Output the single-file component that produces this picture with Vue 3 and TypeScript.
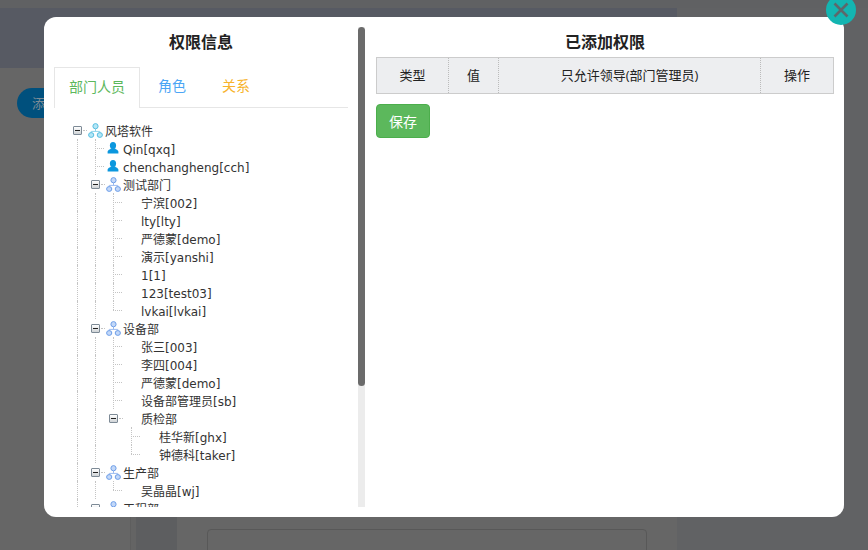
<script setup lang="ts">
import { computed } from 'vue';

interface TreeNode {
    name: string;
    kind?: 'org' | 'user';
    children?: TreeNode[];
}
interface TreeRow {
    name: string;
    level: number;
    kind?: 'org' | 'user';
    isParent: boolean;
    isLast: boolean;
    guides: number[];
}

const tree: TreeNode[] = [
    {
        name: '风塔软件',
        kind: 'org',
        children: [
            { name: 'Qin[qxq]', kind: 'user' },
            { name: 'chenchangheng[cch]', kind: 'user' },
            {
                name: '测试部门',
                kind: 'org',
                children: [
                    { name: '宁滨[002]' },
                    { name: 'lty[lty]' },
                    { name: '严德蒙[demo]' },
                    { name: '演示[yanshi]' },
                    { name: '1[1]' },
                    { name: '123[test03]' },
                    { name: 'lvkai[lvkai]' },
                ],
            },
            {
                name: '设备部',
                kind: 'org',
                children: [
                    { name: '张三[003]' },
                    { name: '李四[004]' },
                    { name: '严德蒙[demo]' },
                    { name: '设备部管理员[sb]' },
                    {
                        name: '质检部',
                        children: [{ name: '桂华新[ghx]' }, { name: '钟德科[taker]' }],
                    },
                ],
            },
            {
                name: '生产部',
                kind: 'org',
                children: [{ name: '吴晶晶[wj]' }],
            },
            { name: '工程部', kind: 'org', children: [] },
        ],
    },
];

const rows = computed(() => {
    const out: TreeRow[] = [];
    const walk = (nodes: TreeNode[], level: number, guides: number[]) => {
        nodes.forEach((node, i) => {
            const isLast = i === nodes.length - 1;
            const isParent = !!node.children;
            out.push({ name: node.name, kind: node.kind, level, isParent, isLast, guides });
            if (node.children) {
                walk(node.children, level + 1, isLast && level > 0 ? guides : [...guides, level]);
            }
        });
    };
    walk(tree, 0, []);
    return out;
});

const columns = [
    { label: '类型', width: '72px' },
    { label: '值', width: '50px' },
    { label: '只允许领导(部门管理员)', width: '262px' },
    { label: '操作', width: 'auto' },
];
</script>

<template>
    <div class="page">
        <div class="page-top"></div>
        <div class="page-head"></div>
        <div class="page-body">
            <div class="add-btn">添加</div>
            <div class="page-side"></div>
            <div class="page-card">
                <div class="page-input"></div>
            </div>
        </div>

        <div class="modal">
            <div class="close">
                <svg width="18" height="18" viewBox="0 0 18 18">
                    <path d="M2.5 2.5 L15.5 15.5 M15.5 2.5 L2.5 15.5" stroke="#5c686b" stroke-width="2.6" fill="none" />
                </svg>
            </div>

            <div class="left">
                <div class="left-inner">
                    <h3 class="title">权限信息</h3>
                    <div class="tabs">
                        <div class="tab active">部门人员</div>
                        <div class="tab blue">角色</div>
                        <div class="tab orange">关系</div>
                    </div>
                    <div class="tree">
                        <div v-for="(row, i) in rows" :key="i" class="row" :style="{ paddingLeft: row.level * 18 + 'px' }">
                            <i
                                v-for="g in row.guides"
                                :key="g"
                                class="guide"
                                :style="{ left: g * 18 + 4 + 'px' }"
                            ></i>
                            <i
                                v-if="!row.isParent && row.level > 0"
                                class="guide"
                                :class="{ half: row.isLast }"
                                :style="{ left: row.level * 18 + 4 + 'px' }"
                            ></i>
                            <span class="switch-cell">
                                <span v-if="row.isParent" class="switch"></span>
                                <span v-else class="dash"></span>
                                <span v-if="row.isParent" class="dash side"></span>
                            </span>
                            <span class="icon-cell">
                                <svg v-if="row.kind === 'org'" width="15" height="15" viewBox="0 0 15 15" :class="row.level ? 'org-blue' : 'org-cyan'">
                                    <path d="M7.5 6 V8.4 M3.2 10 V8.4 H11.8 V10" class="org-line" fill="none" />
                                    <ellipse cx="7.5" cy="3.2" rx="2.6" ry="2.6" class="org-node" />
                                    <ellipse cx="3.2" cy="12" rx="2.6" ry="2.4" class="org-node" />
                                    <ellipse cx="11.8" cy="12" rx="2.6" ry="2.4" class="org-node" />
                                </svg>
                                <svg v-else-if="row.kind === 'user'" width="12" height="12" viewBox="0 0 12 12">
                                    <ellipse cx="6" cy="3.5" rx="3.1" ry="3.5" fill="#0b97de" />
                                    <path d="M0.6 11.6 V9.6 C0.6 8 3 7.6 4.2 6.2 H7.8 C9 7.6 11.4 8 11.4 9.6 V11.6 Z" fill="#0b97de" />
                                </svg>
                            </span>
                            <span class="name">{{ row.name }}</span>
                        </div>
                    </div>
                </div>
                <div class="scrollbar">
                    <div class="scrollbar-thumb"></div>
                </div>
            </div>

            <div class="right">
                <h3 class="title">已添加权限</h3>
                <div class="table">
                    <div
                        v-for="col in columns"
                        :key="col.label"
                        class="cell"
                        :style="{ width: col.width }"
                    >
                        {{ col.label }}
                    </div>
                </div>
                <button class="save">保存</button>
            </div>
        </div>
    </div>
</template>

<style>
html,
body {
    margin: 0;
    background: #616264;
}
</style>

<style scoped>
.page {
    position: relative;
    width: 868px;
    height: 550px;
    overflow: hidden;
    background: #616264;
    font-family: 'Open Sans', 'Noto Sans CJK SC', sans-serif;
}

.page-top {
    height: 8px;
    background: #606163;
}

.page-head {
    height: 60px;
    margin-right: 191px;
    background: #575a63;
}

.page-body {
    position: relative;
    height: 482px;
    margin-right: 191px;
    background: #666;
}

.add-btn {
    position: absolute;
    left: 17px;
    top: 20px;
    width: 60px;
    height: 30px;
    border-radius: 15px;
    padding-left: 15px;
    box-sizing: border-box;
    background: #00507d;
    color: #7d8c96;
    font-size: 13px;
    line-height: 30px;
}

.page-side {
    position: absolute;
    left: 131px;
    width: 41px;
    top: 0;
    bottom: 0;
    margin-left: 5px;
    background: #5d5e60;
    box-shadow: -5px 0 0 #646464, -6px 0 0 #5e5e5e;
}

.page-card {
    position: absolute;
    left: 177px;
    right: 0;
    bottom: 0;
    top: 380px;
}

.page-input {
    position: absolute;
    left: 30px;
    right: 30px;
    top: 81px;
    height: 40px;
    border: 1px solid #585858;
    border-radius: 4px;
}

.modal {
    position: absolute;
    left: 44px;
    top: 17px;
    width: 800px;
    height: 500px;
    background: #fff;
    border-radius: 12px;
    display: flex;
    box-sizing: border-box;
    padding-top: 10px;
}

.close {
    position: absolute;
    right: -12px;
    top: -22px;
    width: 30px;
    height: 30px;
    border-radius: 50%;
    background: #13b5b1;
    display: flex;
    align-items: center;
    justify-content: center;
}

.left {
    display: flex;
    width: 321px;
    height: 480px;
    flex: none;
}

.left-inner {
    flex: 1;
    min-width: 0;
    box-sizing: border-box;
    padding: 0 10px;
    overflow: hidden;
}

.scrollbar {
    flex: none;
    width: 7px;
    background: #ececec;
}

.scrollbar-thumb {
    height: 359px;
    background: #6b6b6b;
    border-radius: 4px;
}

.right {
    flex: 1;
    padding: 0 10px 0 11px;
}

.title {
    margin: 0;
    height: 30px;
    line-height: 30px;
    text-align: center;
    font-size: 16px;
    font-weight: 700;
    color: #222;
}

.tabs {
    display: flex;
    margin-top: 10px;
    height: 40px;
    border-bottom: 1px solid #e6e6e6;
}

.tab {
    padding: 0 18px;
    font-size: 14px;
    line-height: 38px;
}

.tab.active {
    padding: 0 14px;
    height: 40px;
    border: 1px solid #e6e6e6;
    border-bottom: none;
    color: #5cb85c;
    background: #fff;
    width: 56px;
}

.tab.blue {
    color: #4ba5f5;
}

.tab.orange {
    color: #f7b32b;
}

.tree {
    padding-top: 13px;
    padding-left: 19px;
}

.row {
    position: relative;
    display: flex;
    align-items: center;
    height: 18px;
    font-family: 'DejaVu Sans', 'Noto Sans CJK SC', sans-serif;
    font-size: 12px;
    color: #333;
    white-space: nowrap;
}

.name {
    display: block;
    height: 18px;
    line-height: 22px;
}

.guide {
    position: absolute;
    top: 0;
    bottom: 0;
    border-left: 1px dotted #c4c4c4;
}

.guide.half {
    bottom: 9px;
}

.switch-cell {
    position: relative;
    flex: none;
    width: 14px;
    height: 18px;
}

.switch {
    position: absolute;
    left: 0;
    top: 5px;
    width: 7px;
    height: 7px;
    border: 1px solid #7d8a96;
    border-radius: 1px;
    background: linear-gradient(#fff, #cfd3d6);
}

.switch::after {
    content: '';
    position: absolute;
    left: 1px;
    right: 1px;
    top: 3px;
    height: 1px;
    background: #222;
}

.dash {
    position: absolute;
    left: 4px;
    top: 9px;
    width: 9px;
    border-top: 1px dotted #c4c4c4;
}

.dash.side {
    left: 10px;
    width: 4px;
}

.icon-cell {
    flex: none;
    width: 16px;
    height: 18px;
    margin-right: 2px;
    display: flex;
    align-items: center;
    justify-content: center;
}

.org-cyan .org-node {
    fill: #b5e6f5;
    stroke: #58bfe2;
}

.org-cyan .org-line {
    stroke: #8fd4ea;
}

.org-blue .org-node {
    fill: #c3d8f8;
    stroke: #6f9fe8;
}

.org-blue .org-line {
    stroke: #9dbcf0;
}

.table {
    display: flex;
    height: 37px;
    box-sizing: border-box;
    border: 1px solid #ccc;
    background: #edeef0;
}

.cell {
    flex: none;
    box-sizing: border-box;
    line-height: 35px;
    text-align: center;
    font-size: 13px;
    color: #222;
    border-right: 1px dotted #bbb;
}

.cell:last-child {
    flex: 1;
    border-right: none;
}

.save {
    display: block;
    margin-top: 10px;
    width: 54px;
    height: 34px;
    padding: 0;
    border: 1px solid #4cae4c;
    border-radius: 4px;
    background: #5cb85c;
    color: #fff;
    font-family: inherit;
    font-size: 14px;
}
</style>
